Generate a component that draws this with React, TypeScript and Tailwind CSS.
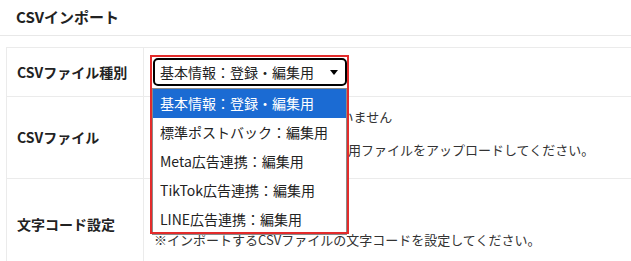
const font = { fontFamily: '"Noto Sans CJK JP", "Noto Sans", sans-serif' };

const options = [
  '基本情報：登録・編集用',
  '標準ポストバック：編集用',
  'Meta広告連携：編集用',
  'TikTok広告連携：編集用',
  'LINE広告連携：編集用',
];

function TypeSelect() {
  return (
    <div className="relative w-[194px]">
      <div className="flex h-[28px] items-center justify-between rounded-[5px] border-2 border-black bg-white pl-[5px] pr-[7px] text-[14px] text-[#222]">
        <span>{options[0]}</span>
        <span className="h-0 w-0 border-x-[4px] border-t-[5px] border-x-transparent border-t-black" />
      </div>
      <div className="absolute left-[-1px] top-[30px] z-10 w-[195px] border border-[#8a8a8a] bg-white">
        {options.map((o, i) => (
          <div
            key={o}
            className={`flex h-[29px] items-center pl-[7px] text-[14px] ${
              i === 0 ? 'bg-[#1b6bd3] text-white' : 'text-[#222]'
            }`}
          >
            {o}
          </div>
        ))}
      </div>
      <div className="pointer-events-none absolute left-[-3px] top-[-3px] z-20 h-[179px] w-[199px] border-2 border-[#e32b2b]" />
    </div>
  );
}

export default function App() {
  return (
    <div className="h-[261px] w-[631px] overflow-hidden bg-white text-[#333]" style={font}>
      <div className="flex h-[36px] items-center border-b border-[#e8e8e8] pl-[16px] text-[15px] font-bold text-[#222]">
        CSVインポート
      </div>
      <div className="ml-[6px] mt-[11px] w-[700px] border-l border-t border-[#ebebeb]">
        <div className="grid grid-cols-[137px_1fr] border-b border-[#ebebeb]">
          <div className="flex h-[48px] items-center border-r border-[#ebebeb] pl-[10px] text-[14px] font-bold text-[#222]">
            CSVファイル種別
          </div>
          <div className="flex items-center pl-[9px]">
            <TypeSelect />
          </div>
        </div>
        <div className="grid grid-cols-[137px_1fr] border-b border-[#ebebeb]">
          <div className="flex h-[81px] items-center border-r border-[#ebebeb] pl-[10px] text-[14px] font-bold text-[#222]">
            CSVファイル
          </div>
          <div className="flex flex-col gap-[13px] pl-[9px] pt-[10px] text-[13px]">
            <div className="flex h-[20px] items-center gap-[6px]">
              <span className="w-[117px] border border-[#999] bg-[#eee] px-[6px] text-[12px]">ファイルを選択</span>
              <span>選択されていません</span>
            </div>
            <div className="flex h-[20px] items-center">※選択した種別の各種インポート用ファイルをアップロードしてください。</div>
          </div>
        </div>
        <div className="grid grid-cols-[137px_1fr]">
          <div className="flex h-[90px] items-center border-r border-[#ebebeb] pl-[10px] text-[14px] font-bold text-[#222]">
            文字コード設定
          </div>
          <div className="flex flex-col gap-[11px] pl-[9px] pt-[12px] text-[13px]">
            <div className="h-[28px] w-[150px] rounded border border-[#999] px-[5px]">Shift_JIS</div>
            <div className="flex h-[20px] items-center pl-[1px]">※インポートするCSVファイルの文字コードを設定してください。</div>
          </div>
        </div>
      </div>
    </div>
  );
}
